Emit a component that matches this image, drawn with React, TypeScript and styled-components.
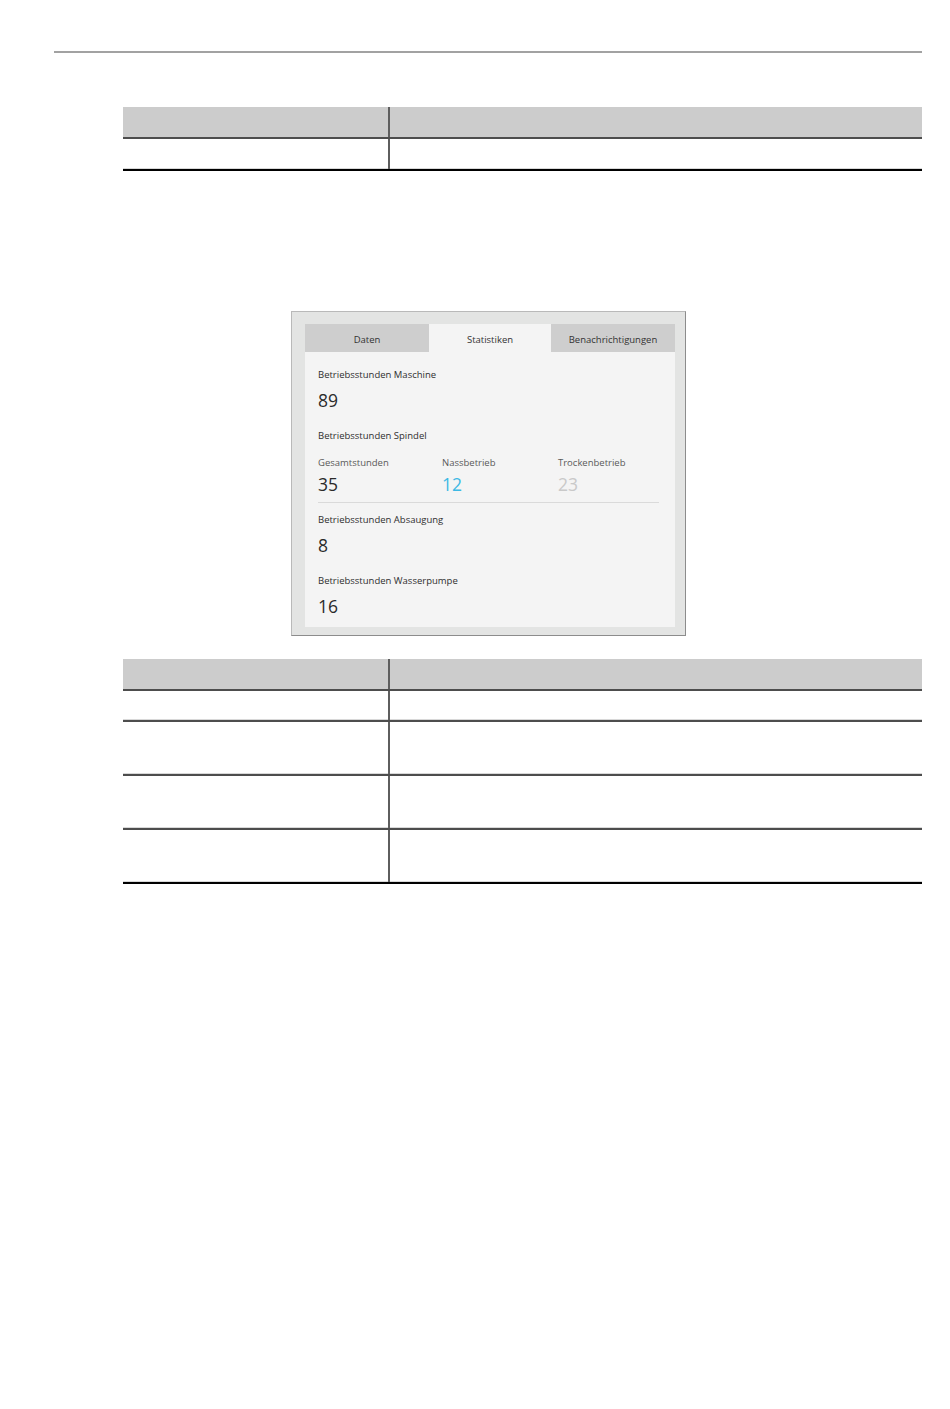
import styled, { createGlobalStyle } from 'styled-components'

const GlobalStyle = createGlobalStyle`
    body {
        margin: 0;
        background: #fff;
        font-family: 'Open Sans', 'Noto Sans', sans-serif;
        color: #333;
    }
`

const tabs = ['Daten', 'Statistiken', 'Benachrichtigungen']
const activeTab = 'Statistiken'

const spindle = [
    { label: 'Gesamtstunden', value: '35', tone: 'dark' as const },
    { label: 'Nassbetrieb', value: '12', tone: 'blue' as const },
    { label: 'Trockenbetrieb', value: '23', tone: 'muted' as const },
]

// body row heights of the lower table, border included
const bottomRows = [31, 54, 54, 54]

export default function App() {
    return (
        <Page>
            <GlobalStyle />
            <Rule />

            <Table>
                <TableRow head height={32}>
                    <Cell />
                    <Cell />
                </TableRow>
                <TableRow height={32} last>
                    <Cell />
                    <Cell />
                </TableRow>
            </Table>

            <Frame>
                <TabBar>
                    {tabs.map((t) => (
                        <Tab key={t} active={t === activeTab}>
                            {t}
                        </Tab>
                    ))}
                </TabBar>
                <Panel>
                    <Label>Betriebsstunden Maschine</Label>
                    <Value>89</Value>

                    <Label spaced>Betriebsstunden Spindel</Label>
                    <SpindleRow>
                        {spindle.map((s) => (
                            <SpindleCol key={s.label}>
                                <SubLabel>{s.label}</SubLabel>
                                <SubValue tone={s.tone}>{s.value}</SubValue>
                            </SpindleCol>
                        ))}
                    </SpindleRow>
                    <Divider />

                    <Label>Betriebsstunden Absaugung</Label>
                    <Value>8</Value>

                    <Label spaced>Betriebsstunden Wasserpumpe</Label>
                    <Value>16</Value>
                </Panel>
            </Frame>

            <Table gap={23}>
                <TableRow head height={32}>
                    <Cell />
                    <Cell />
                </TableRow>
                {bottomRows.map((h, i) => (
                    <TableRow key={i} height={h} last={i === bottomRows.length - 1}>
                        <Cell />
                        <Cell />
                    </TableRow>
                ))}
            </Table>
        </Page>
    )
}

const Page = styled.div`
    width: 950px;
    min-height: 1409px;
    padding-top: 51px;
    box-sizing: border-box;
`

const Rule = styled.div`
    margin-left: 54px;
    width: 868px;
    height: 2px;
    background: #a2a2a2;
`

const Table = styled.div<{ gap?: number }>`
    margin: ${({ gap }) => gap ?? 54}px 0 0 123px;
    width: 799px;
    display: flex;
    flex-direction: column;
`

const TableRow = styled.div<{ head?: boolean; last?: boolean; height: number }>`
    display: grid;
    grid-template-columns: 267px 1fr;
    box-sizing: border-box;
    height: ${({ height }) => height}px;
    background: ${({ head }) => (head ? '#cccccc' : '#fff')};
    border-bottom: 2px solid ${({ last }) => (last ? '#000' : '#4d4d4d')};
    box-shadow: ${({ head }) => (head ? 'none' : 'inset 0 -1px 0 #d8d8d8')};

    & > div:first-child {
        border-right: 2px solid #5e5e5e;
    }
`

const Cell = styled.div``

const Frame = styled.div`
    margin: 140px 0 0 291px;
    width: 395px;
    box-sizing: border-box;
    background: #e3e4e3;
    border: 1px solid #b9b9b9;
    border-right-color: #8c8c8c;
    border-bottom-color: #8c8c8c;
    padding: 12px 10px 8px 13px;
`

const TabBar = styled.div`
    display: grid;
    grid-template-columns: 124px 122px 124px;
    height: 28px;
`

const Tab = styled.div<{ active: boolean }>`
    display: flex;
    align-items: center;
    justify-content: center;
    font-size: 9.5px;
    color: #333;
    padding-top: 2px;
    background: ${({ active }) => (active ? '#f4f4f4' : '#cecece')};
`

const Panel = styled.div`
    background: #f4f4f4;
    padding: 16px 16px 10px 13px;
    display: flex;
    flex-direction: column;
`

const Label = styled.div<{ spaced?: boolean }>`
    font-size: 9.5px;
    line-height: 14px;
    color: #2f2f2f;
    margin-top: ${({ spaced }) => (spaced ? 18 : 0)}px;
`

const Value = styled.div`
    font-size: 17.5px;
    line-height: 22px;
    color: #2a2a2a;
    margin-top: 7px;
`

const SpindleRow = styled.div`
    display: grid;
    grid-template-columns: 124px 116px 1fr;
    margin-top: 13px;
`

const SpindleCol = styled.div`
    display: flex;
    flex-direction: column;
`

const SubLabel = styled.div`
    font-size: 9.5px;
    line-height: 14px;
    color: #5a5a5a;
`

const toneColor = { dark: '#2a2a2a', blue: '#3db9e4', muted: '#c9c9c9' }

const SubValue = styled.div<{ tone: keyof typeof toneColor }>`
    font-size: 17.5px;
    line-height: 22px;
    margin-top: 3px;
    color: ${({ tone }) => toneColor[tone]};
`

const Divider = styled.div`
    height: 1px;
    background: #dadada;
    margin: 7px 0 10px;
`
